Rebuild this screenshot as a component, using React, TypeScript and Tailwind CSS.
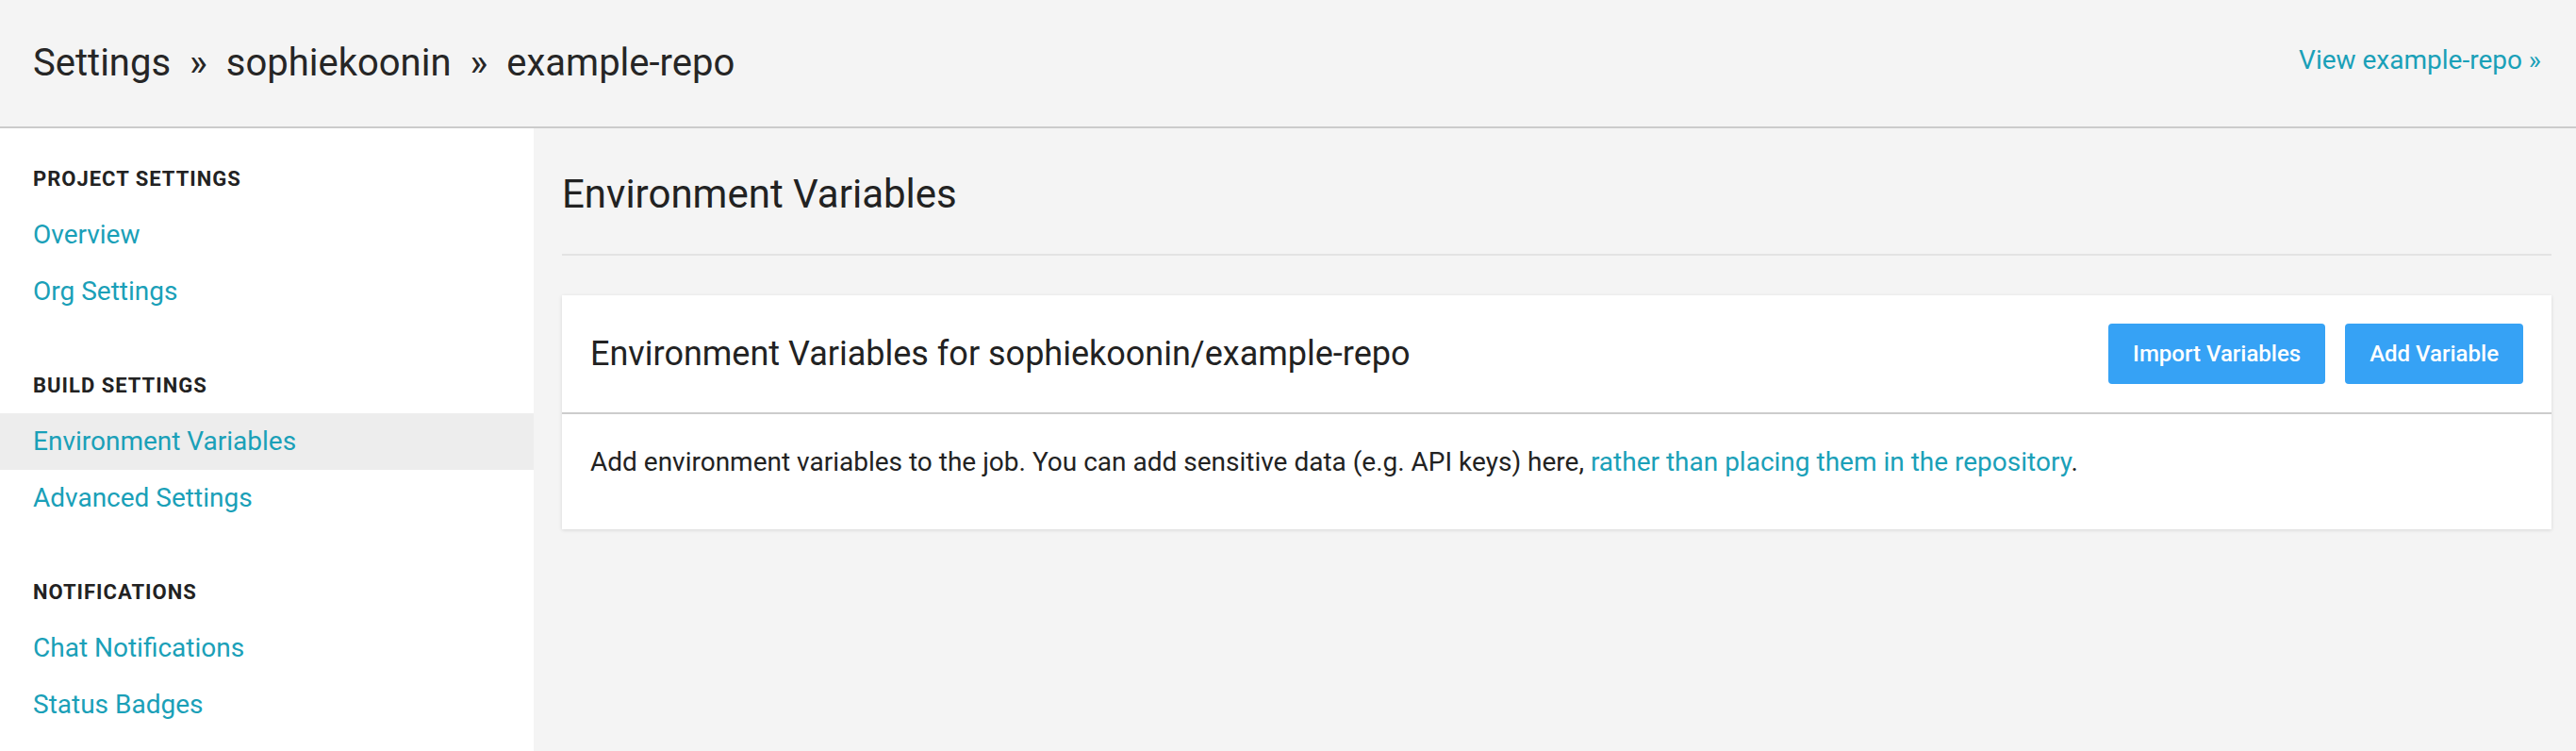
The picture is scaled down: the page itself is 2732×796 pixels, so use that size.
const sections = [
  {
    title: "PROJECT SETTINGS",
    items: ["Overview", "Org Settings"],
  },
  {
    title: "BUILD SETTINGS",
    items: ["Environment Variables", "Advanced Settings"],
  },
  {
    title: "NOTIFICATIONS",
    items: ["Chat Notifications", "Status Badges"],
  },
];

const active = "Environment Variables";

const Sidebar = () => {
  return (
    <aside className="w-[566px] shrink-0 bg-white pt-[42px] flex flex-col gap-[58px]">
      {sections.map((section) => (
        <div key={section.title}>
          <div className="pl-[35px] mb-[17px] text-[22px] leading-[24px] font-bold tracking-[1px] text-[#222222]">
            {section.title}
          </div>
          {section.items.map((item) => (
            <a
              key={item}
              href="#"
              className={
                item === active
                  ? "h-[60px] pl-[35px] flex items-center text-[28px] text-[#1aa0b8] bg-[#ededed]"
                  : "h-[60px] pl-[35px] flex items-center text-[28px] text-[#1aa0b8]"
              }
            >
              {item}
            </a>
          ))}
        </div>
      ))}
    </aside>
  );
};

const App = () => {
  return (
    <div className="min-h-screen w-full flex flex-col bg-[#f4f4f4] font-['Roboto',sans-serif]">
      {/* Top bar */}
      <header className="h-[136px] shrink-0 flex items-center justify-between pl-[35px] pr-[37px] border-b-2 border-[#cbcbcb]">
        <h1 className="text-[40px] leading-[48px] text-[#262626]">
          Settings<span className="px-[20px]">»</span>sophiekoonin
          <span className="px-[20px]">»</span>example-repo
        </h1>
        <a href="#" className="text-[28px] leading-[32px] text-[#1aa0b8] mt-[-6px]">
          View example-repo »
        </a>
      </header>

      <div className="flex flex-1">
        <Sidebar />

        {/* Main content */}
        <main className="flex-1 pl-[30px] pr-[26px] pt-[46px] pb-[40px]">
          <h2 className="text-[42px] leading-[48px] text-[#222222] pb-[39px] border-b-2 border-[#e3e3e3]">
            Environment Variables
          </h2>

          <div className="mt-[42px] bg-white shadow-[0_1px_4px_rgba(0,0,0,0.12)]">
            <div className="h-[126px] px-[30px] flex items-center justify-between border-b-2 border-[#cccccc]">
              <h3 className="text-[36px] leading-[40px] text-[#222222]">
                Environment Variables for sophiekoonin/example-repo
              </h3>
              <div className="flex gap-[21px]">
                <button className="h-[64px] px-[26px] rounded-[4px] bg-[#36a2f5] text-white text-[24px] font-medium">
                  Import Variables
                </button>
                <button className="h-[64px] px-[26px] rounded-[4px] bg-[#36a2f5] text-white text-[24px] font-medium">
                  Add Variable
                </button>
              </div>
            </div>
            <div className="px-[30px] pt-[36px] pb-[56px] text-[28px] leading-[30px] text-[#222222]">
              Add environment variables to the job. You can add sensitive data (e.g. API keys) here,{" "}
              <a href="#" className="text-[#1aa0b8]">
                rather than placing them in the repository
              </a>
              .
            </div>
          </div>
        </main>
      </div>
    </div>
  );
};

export default App;
